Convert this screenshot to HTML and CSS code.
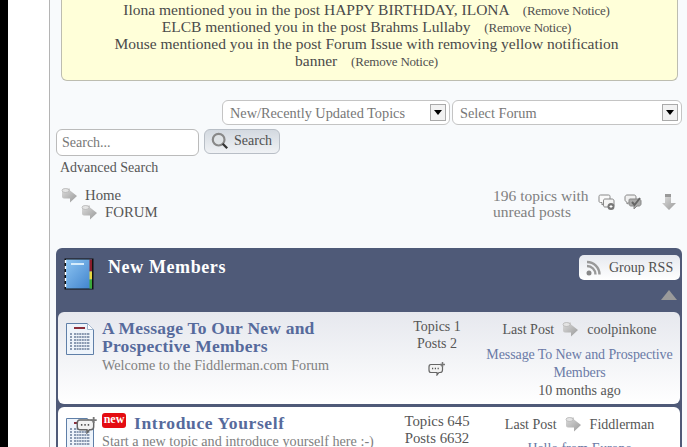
FILE: index.html
```html
<!DOCTYPE html>
<html lang="en">
<head>
<meta charset="utf-8">
<title>Forum</title>
<link rel="stylesheet" href="styles.css">
</head>
<body>
<svg class="defs" width="0" height="0" aria-hidden="true">
  <defs>
    <linearGradient id="ga" x1="0" y1="0" x2="1" y2="1"><stop offset="0" stop-color="#dcdcdc"/><stop offset="1" stop-color="#999"/></linearGradient>
    <linearGradient id="gb" x1="0" y1="0" x2="1" y2="1"><stop offset="0" stop-color="#8cc4f2"/><stop offset="1" stop-color="#3f82cc"/></linearGradient>
    <symbol id="arrow" viewBox="0 0 17 16">
      <path d="M1 3Q1 1 4 1H9V3L16 8.500 9 15V11H3Q1 11 1 9Z" fill="url(#ga)"/>
      <ellipse cx="4.500" cy="3" rx="3.500" ry="2" fill="#e4e4e4" stroke="#b0b0b0" stroke-width=".7"/>
    </symbol>
    <symbol id="doc" viewBox="0 0 28 32">
      <path d="M.5.5h21l6 6v25H.500z" fill="#eef4fb" stroke="#5f7fa8"/>
      <path d="M21.500.5v6h6" fill="#fff" stroke="#9fb4cc"/>
      <rect x="8" y="4" width="11" height="2" fill="#8c2f3c"/>
      <path d="M4 11h2M8 11h16M4 14h2M8 14h16M4 17h2M8 17h16M4 20h2M8 20h16M4 23h2M8 23h16M4 26h2M8 26h16" stroke="#27406a" stroke-width="1.200" stroke-dasharray="2 .6"/>
    </symbol>
    <symbol id="chatplus" viewBox="0 0 18 14">
      <path d="M3 2.500h9c1.500 0 2.500 1 2.500 2.500v3c0 1.500-1 2.500-2.500 2.500h-1L9 13v-2.500H3C1.500 10.500 1 9.500 1 8V5c0-1.500.5-2.500 2-2.500z" fill="#f2f2f2" stroke="#666" stroke-width="1.200"/>
      <path d="M4 6.500h1.200M6.800 6.500H8M9.600 6.500h1.200" stroke="#555" stroke-width="1.400"/>
      <path d="M14.500 0v5M12 2.500h5" stroke="#777" stroke-width="1.500"/>
    </symbol>
  </defs>
</svg>

<div class="rail"></div>
<div class="gutter"></div>
<main class="main">
  <section class="notice">
    <p>Ilona mentioned you in the post HAPPY BIRTHDAY, ILONA <span class="remove">(Remove Notice)</span></p>
    <p>ELCB mentioned you in the post Brahms Lullaby <span class="remove">(Remove Notice)</span></p>
    <p>Mouse mentioned you in the post Forum Issue with removing yellow notification banner <span class="remove">(Remove Notice)</span></p>
  </section>

  <div class="selects">
    <div class="select select-a"><span>New/Recently Updated Topics</span><i class="drop"></i></div>
    <div class="select select-b"><span>Select Forum</span><i class="drop"></i></div>
  </div>

  <div class="searchrow">
    <div class="searchbox">Search...</div>
    <div class="searchbtn">
      <svg width="18" height="18" viewBox="0 0 20 20"><circle cx="8.500" cy="8.500" r="6.500" fill="#dfe3e6" stroke="#888" stroke-width="2.400"/><path d="M13 13l5 5" stroke="#333" stroke-width="2.500"/></svg>
      <span>Search</span>
    </div>
  </div>
  <div class="advanced">Advanced Search</div>

  <div class="navrow">
    <div class="crumbs">
      <div class="crumb"><svg class="ico-arrow"><use href="#arrow"/></svg><span>Home</span></div>
      <div class="crumb crumb-sub"><svg class="ico-arrow"><use href="#arrow"/></svg><span>FORUM</span></div>
    </div>
    <div class="unread">196 topics with<br>unread posts</div>
    <div class="tools">
      <svg width="18" height="18" viewBox="0 0 18 18"><path d="M2.500 2h8c1 0 1.500.5 1.500 1.500V8c0 1-.5 1.500-1.500 1.500H7L4 12V9.500H2.500C1.500 9.500 1 9 1 8V3.500C1 2.500 1.500 2 2.500 2z" fill="#fafafa" stroke="#888"/><path d="M7 6h7c1 0 2 .5 2 2v4c0 1-.5 2-2 2v1l-2-1H7c-1 0-1.500-.5-1.500-2V8C5.500 6.500 6 6 7 6z" fill="#f4f4f4" stroke="#888"/><circle cx="13" cy="13.500" r="3.500" fill="#777"/><path d="M11.500 13.500h3M13 12v3" stroke="#fff"/></svg>
      <svg width="18" height="18" viewBox="0 0 18 18"><path d="M3 2h7c1 0 2 .5 2 2v3c0 1-1 2-2 2H6L3 11V9C2 9 1 8 1 7V4c0-1 1-2 2-2z" fill="#f0f0f0" stroke="#888"/><path d="M6 6h9c1 0 2 1 2 2v3c0 1-1 2-2 2h-2l-3 3v-3H7c-1 0-2-1-2-2V8c0-1 0-2 1-2z" fill="#aaa" stroke="#888"/><path d="M8 9l2.500 3L16 5" fill="none" stroke="#666" stroke-width="2"/></svg>
      <svg class="tool-down" width="18" height="18" viewBox="0 0 18 18"><path d="M5 1h6v3H5z" fill="#999"/><path d="M5 4h6v6h5l-7 7-7-7h3z" fill="url(#ga)"/></svg>
    </div>
  </div>

  <section class="group">
    <header class="grouphead">
      <svg class="bookicon" width="30" height="32" viewBox="0 0 30 32">
        <rect x=".5" y=".5" width="29" height="31" fill="#111"/>
        <rect x="2" y="1.500" width="26" height="29" fill="url(#gb)"/>
        <rect x="25.500" y="1.500" width="2.500" height="12" fill="#8c1d2c"/>
        <rect x="25.500" y="13.500" width="2.500" height="8" fill="#e6d640"/>
        <rect x="25.500" y="21.500" width="2.500" height="9" fill="#3aa83a"/>
        <rect x="7" y="5" width="13" height="2" fill="#d6ecfb"/>
        <path d="M1.500 2v28" stroke="#fff" stroke-width="1.500" stroke-dasharray="3 3"/>
      </svg>
      <h2 class="grouptitle">New Members</h2>
      <div class="groupside">
        <div class="rss">
          <svg width="17" height="17" viewBox="0 0 17 17"><circle cx="3" cy="14" r="2.500" fill="#888"/><path d="M1 7.500a8.500 8.500 0 0 1 8.500 8.500M1 3.500a12.500 12.500 0 0 1 12.500 12.500" transform="translate(0 -.5)" fill="none" stroke="#999" stroke-width="2.400"/></svg>
          <span>Group RSS</span>
        </div>
        <i class="collapse"></i>
      </div>
    </header>

    <article class="forum forum-first">
      <svg class="docicon"><use href="#doc"/></svg>
      <div class="info">
        <h3 class="ftitle">A Message To Our New and Prospective Members</h3>
        <p class="fdesc">Welcome to the Fiddlerman.com Forum</p>
      </div>
      <div class="stats">
        <div>Topics 1</div>
        <div>Posts 2</div>
        <svg class="newtopic"><use href="#chatplus"/></svg>
      </div>
      <div class="last">
        <div class="lasthead"><span>Last Post</span><svg class="ico-arrow"><use href="#arrow"/></svg><span>coolpinkone</span></div>
        <div class="lastlink">Message To New and Prospective Members</div>
        <div>10 months ago</div>
      </div>
    </article>

    <article class="forum forum-second">
      <div class="docwrap">
        <svg class="docicon"><use href="#doc"/></svg>
        <svg class="docbadge"><use href="#chatplus"/></svg>
      </div>
      <div class="info">
        <h3 class="ftitle"><span class="newbadge">new</span>Introduce Yourself</h3>
        <p class="fdesc">Start a new topic and introduce yourself here :-)</p>
      </div>
      <div class="stats stats-tight">
        <div>Topics 645</div>
        <div>Posts 6632</div>
      </div>
      <div class="last">
        <div class="lasthead"><span>Last Post</span><svg class="ico-arrow"><use href="#arrow"/></svg><span>Fiddlerman</span></div>
        <div class="lastlink">Hello from Europe</div>
      </div>
    </article>
  </section>
</main>
</body>
</html>
```
FILE: styles.css
```css
* { box-sizing: border-box; }

html, body { height: 100%; }

body {
  margin: 0;
  height: 447px;
  overflow: hidden;
  display: flex;
  background: #fff;
  font-family: "Liberation Serif", "Times New Roman", serif;
  font-size: 15.5px;
  line-height: 17px;
  color: #565656;
}

.defs { position: absolute; }

.rail { flex: 0 0 8px; background: #000; }
.gutter { flex: 0 0 41px; background: #fff; }

.main {
  flex: 1;
  min-width: 0;
  height: 447px;
  overflow: hidden;
  border-left: 1px solid #b4b4b4;
  background: #f8fafc;
  padding: 0 5px 0 6px;
}

/* Notice */
.notice {
  margin: 0 4px 0 5px;
  padding: 1px 44px 10px 38px;
  height: 81px;
  background: #ffffd9;
  border: 1px solid #bdbdb0;
  border-top: 0;
  border-radius: 0 0 6px 6px;
  text-align: center;
  color: #4a4a4a;
}
.notice p { margin: 0; }
.remove {
  margin-left: 10px;
  font-size: 13px;
  line-height: 1;
  letter-spacing: -.2px;
  color: #505050;
}

/* Selects */
.selects {
  display: flex;
  justify-content: flex-end;
  gap: 2px;
  margin-top: 19px;
}
.select {
  height: 25px;
  display: flex;
  align-items: center;
  justify-content: space-between;
  padding: 1px 3px 0 7px;
  background: #fff;
  border: 1px solid #c4c4c4;
  border-radius: 6px;
  color: #777;
  font-size: 14.300px;
}
.select-a { width: 228px; }
.select-b { width: 230px; }
.drop {
  width: 16px;
  height: 17px;
  margin-top: -1px;
  display: flex;
  align-items: center;
  justify-content: center;
  border: 1px solid #aaa;
  background: #f2f2f2;
}
.drop::before {
  content: "";
  border: 4px solid transparent;
  border-top: 5px solid #000;
  border-bottom: 0;
}

/* Search */
.searchrow {
  display: flex;
  align-items: flex-start;
  gap: 5px;
  margin-top: 4px;
}
.searchbox {
  width: 143px;
  height: 27px;
  display: flex;
  align-items: center;
  padding: 0 0 1px 5px;
  background: #fff;
  border: 1px solid #bbb;
  border-radius: 6px;
  color: #777;
  font-size: 14px;
}
.searchbtn {
  width: 76px;
  height: 25px;
  display: flex;
  align-items: center;
  gap: 5px;
  padding: 0 0 2px 6px;
  border: 1px solid #b8bec6;
  border-radius: 6px;
  background: linear-gradient(#d3d9e0, #f0f2f5);
  font-size: 14px;
  color: #505050;
}
.advanced {
  margin: 3px 0 0 4px;
  font-size: 14px;
  color: #565656;
}

/* Breadcrumb row */
.navrow {
  display: flex;
  align-items: flex-start;
  margin-top: 10px;
  height: 62px;
}
.crumbs { flex: 1; padding: 1px 0 0 5px; }
.crumb {
  display: flex;
  align-items: center;
  gap: 7px;
  height: 17px;
  font-size: 14.800px;
}
.crumb-sub { margin-left: 20px; }
.ico-arrow { width: 17px; height: 17px; flex: none; }
.unread {
  width: 105px;
  white-space: nowrap;
  color: #808080;
  line-height: 16px;
  margin-top: 2px;
}
.tools {
  display: flex;
  gap: 8px;
  margin-right: 4px;
  margin-top: 7px;
}
.tool-down { margin-left: 10px; }

/* Group */
.group {
  margin-top: 0;
  padding: 0 2px;
  background: #4f5a78;
  border-radius: 6px 6px 0 0;
}
.grouphead {
  height: 64px;
  display: flex;
  align-items: flex-start;
}
.bookicon { margin: 10px 0 0 6px; flex: none; }
.grouptitle {
  flex: 1;
  margin: 9px 0 0 14px;
  font-size: 18px;
  line-height: 20px;
  color: #fff;
  letter-spacing: .6px;
}
.groupside {
  display: flex;
  flex-direction: column;
  align-items: flex-end;
  padding-top: 7px;
}
.rss {
  width: 101px;
  height: 25px;
  display: flex;
  align-items: center;
  gap: 6px;
  padding-left: 7px;
  background: linear-gradient(#e6e9ef, #fff);
  border-radius: 5px;
  font-size: 14px;
  color: #505050;
}
.collapse {
  margin: 10px 3px 0 0;
  width: 0;
  height: 0;
  border: 8px solid transparent;
  border-top: 0;
  border-bottom: 10px solid #9a9a9a;
}

/* Forum rows */
.forum {
  display: flex;
  align-items: flex-start;
  border-radius: 6px;
  margin-bottom: 3px;
  padding-left: 8px;
}
.forum-first {
  height: 92px;
  background: linear-gradient(#e6e8ee, #ffffff);
}
.forum-second {
  height: 92px;
  background: #fff;
}
.docicon { width: 28px; height: 32px; margin-top: 11px; flex: none; }
.docwrap { position: relative; flex: none; height: 40px; }
.docwrap .docicon { display: block; }
.docbadge { position: absolute; left: 10px; top: 10px; width: 22px; height: 17px; }
.info {
  width: 293px;
  flex: none;
  margin-left: 8px;
  padding-top: 7px;
}
.ftitle {
  margin: 0;
  font-size: 17.500px;
  line-height: 18px;
  color: #566a9c;
  letter-spacing: .22px;
}
.fdesc {
  margin: 2px 0 0;
  font-size: 14.200px;
  color: #808080;
}
.newbadge {
  display: inline-block;
  vertical-align: 3px;
  width: 24px;
  height: 15px;
  margin-right: 8px;
  background: #e40c12;
  border-radius: 3px;
  color: #fff;
  font-size: 12px;
  line-height: 13px;
  text-align: center;
  letter-spacing: 0;
  transform: translateY(-3px);
}
.forum-second .ftitle { letter-spacing: .62px; }
.forum-second .fdesc { margin-top: 1px; }

.stats {
  width: 84px;
  flex: none;
  padding-top: 6px;
  text-align: center;
  font-size: 14px;
}
.stats-tight { font-size: 14.800px; }
.newtopic {
  display: block;
  width: 18px;
  height: 14px;
  margin: 10px auto 0;
}
.last {
  flex: 1;
  min-width: 0;
  padding: 9px 0 0;
  text-align: center;
  font-size: 14px;
}
.lasthead {
  display: flex;
  justify-content: center;
  align-items: center;
  gap: 8px;
}
.lastlink {
  margin-top: 8px;
  line-height: 18px;
  font-size: 14px;
  letter-spacing: -.1px;
  color: #6a7aa6;
}
.forum-second .lastlink { margin-top: 7px; }
```
